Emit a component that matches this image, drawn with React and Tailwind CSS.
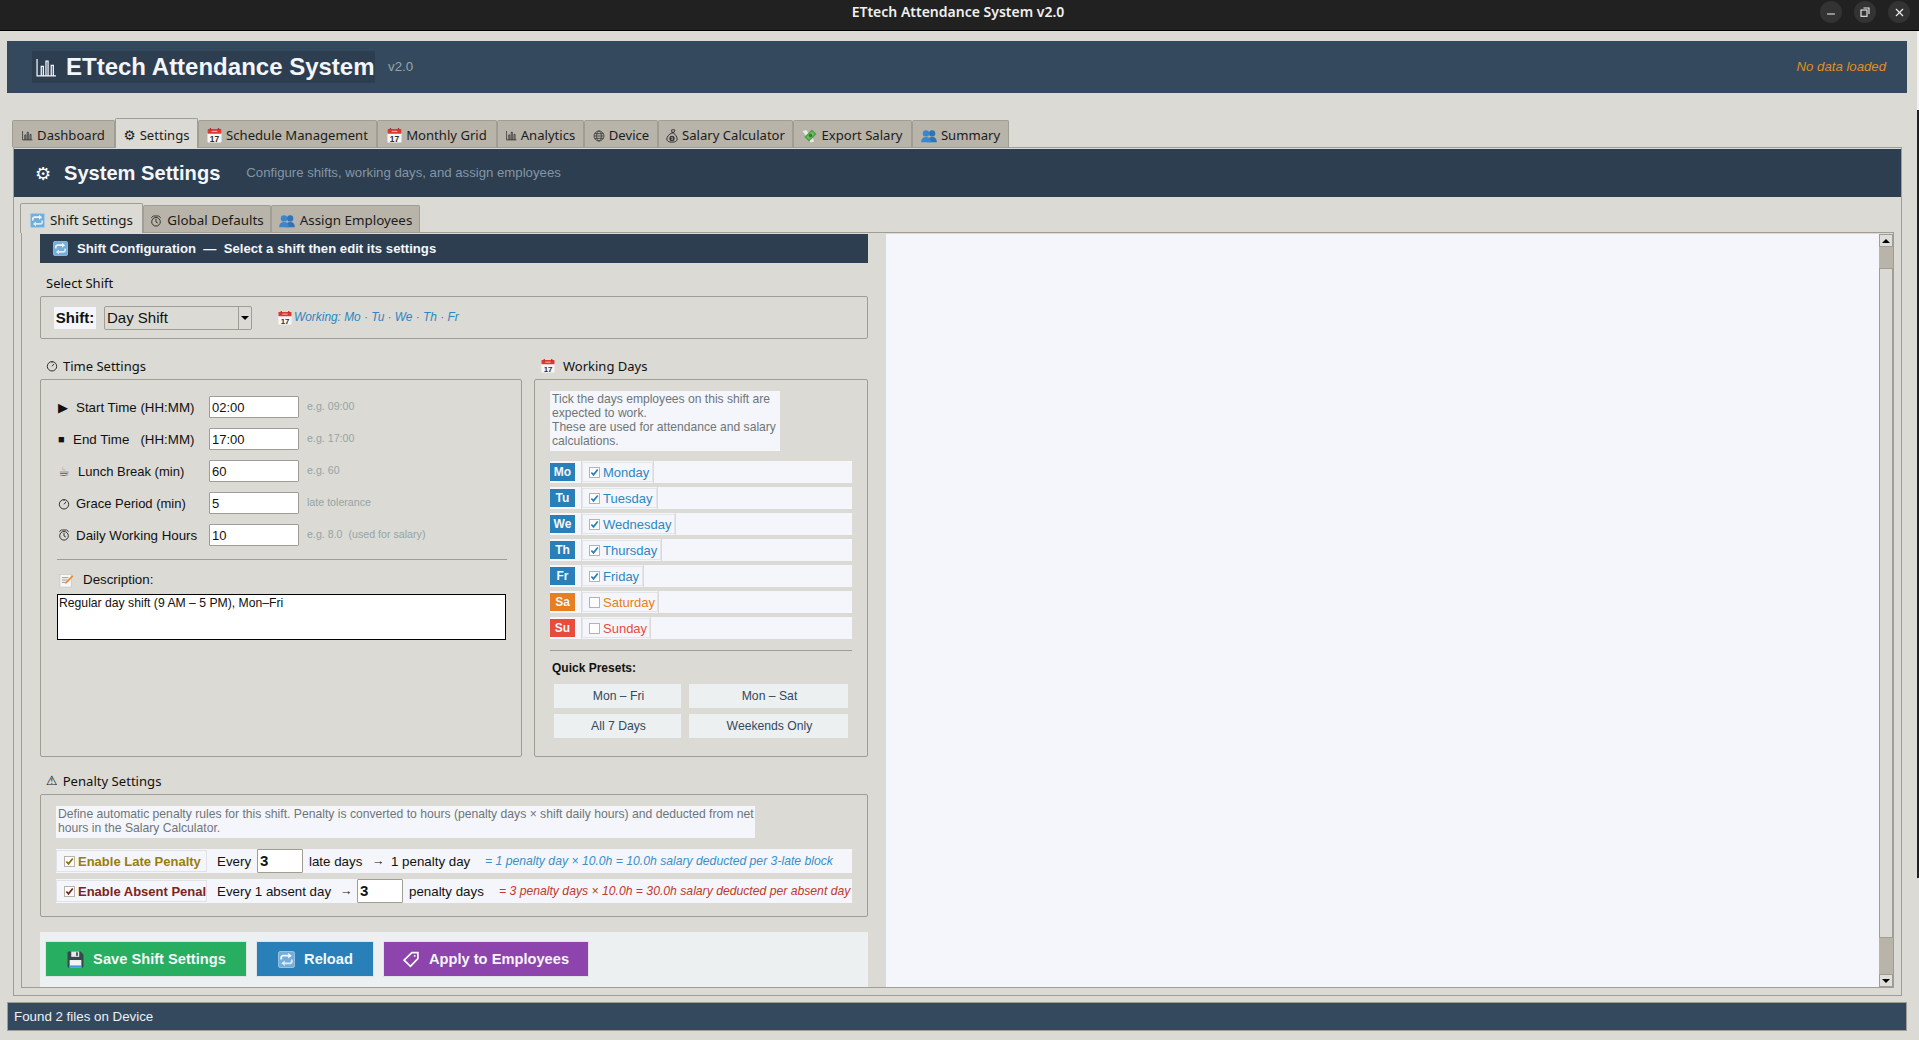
import React from "react";
import { Minus, X } from "lucide-react";

const BarsIcon = ({ className }) => (
  <svg viewBox="0 0 20 18" className={className} fill="none" stroke="currentColor" strokeWidth="1.2">
    <path d="M1 1v16h18" />
    <path d="M5 17V8h2v9M9.5 17V3h2v14M14.5 17V7h2v10" />
  </svg>
);

const CalendarIcon = ({ className }) => (
  <svg viewBox="0 0 16 16" className={className}>
    <rect x="0.5" y="1" width="15" height="14.5" rx="1" fill="#f7f7f7" />
    <rect x="0.5" y="1" width="15" height="5" rx="0.8" fill="#dc3a30" />
    <rect x="3" y="0" width="1.4" height="2.6" fill="#a33" />
    <rect x="11.6" y="0" width="1.4" height="2.6" fill="#a33" />
    <path d="M5 3.6h6" stroke="#f5c7c3" strokeWidth="1" />
    <text x="8" y="14.6" textAnchor="middle" fontSize="9" fontWeight="700" fill="#2f2f2f" fontFamily="Liberation Sans, sans-serif">17</text>
  </svg>
);

const RefreshIcon = ({ className }) => (
  <svg viewBox="0 0 16 16" className={className}>
    <rect x="0.5" y="0.5" width="15" height="15" rx="1.5" fill="#70aede" stroke="#a9cbe6" strokeWidth="0.8" />
    <path d="M3 8V6.2C3 5 3.8 4.4 5 4.4h5" fill="none" stroke="#f5f5f5" strokeWidth="1.7" />
    <path d="M9.6 1.9l3.4 2.6-3.4 2.6z" fill="#f5f5f5" />
    <path d="M13 8v1.8c0 1.2-.8 1.8-2 1.8H6" fill="none" stroke="#e3e9ee" strokeWidth="1.7" />
    <path d="M6.4 9l-3.4 2.6 3.4 2.6z" fill="#e3e9ee" />
  </svg>
);

const PeopleIcon = ({ className }) => (
  <svg viewBox="0 0 18 16" className={className}>
    <circle cx="12.6" cy="5" r="3.6" fill="#2f74b5" />
    <path d="M7 15c.3-4 2-5.8 5.6-5.8S17.7 11 18 15z" fill="#2f74b5" />
    <circle cx="5.6" cy="5" r="3.7" fill="#3b87cf" />
    <path d="M0 15c.3-4 2-5.8 5.6-5.8s5.4 1.8 5.7 5.8z" fill="#3b87cf" />
  </svg>
);

const MoneyIcon = ({ className }) => (
  <svg viewBox="0 0 16 16" className={className}>
    <path d="M0.5 3.5l4-1.5 3 4-3 2.5z" fill="#e9e9e9" />
    <path d="M7.5 11l1.5 4.5 4-1-1.5-3.5z" fill="#e9e9e9" />
    <path d="M2.5 9.5L10.5 1.5l5 5-8 8z" fill="#4c9e46" />
    <path d="M4.5 9.5L10.5 3.5l3 3-6 6z" fill="#6dbb5c" />
    <circle cx="9" cy="8" r="1.8" fill="#2f7a2e" />
  </svg>
);

const BagIcon = ({ className }) => (
  <svg viewBox="0 0 14 16" className={className} fill="none" stroke="#2a2a2a" strokeWidth="1.1">
    <path d="M6.5 1c1-.6 3-.6 4 .2L9 4.2H7.2z" />
    <path d="M7 4.4C3.5 6 1 8.8 1 11.5 1 14 3 15.2 7 15.2s6-1.2 6-3.7C13 8.8 10.8 6 8.6 4.4z" />
    <circle cx="7" cy="10.8" r="3" fill="#2a2a2a" stroke="none" />
    <path d="M8.2 9.8c-.6-.5-2.2-.4-2.1.4.1.9 2.3.5 2.2 1.4-.1.8-1.7.9-2.4.3" stroke="#e8e8e8" strokeWidth="0.7" />
  </svg>
);

const GlobeIcon = ({ className }) => (
  <svg viewBox="0 0 14 14" className={className} fill="none" stroke="#333" strokeWidth="0.9">
    <circle cx="7" cy="7" r="5.8" />
    <ellipse cx="7" cy="7" rx="2.7" ry="5.8" />
    <path d="M1.2 7h11.6M2 4.2h10M2 9.8h10" />
  </svg>
);

const ClockIcon = ({ className }) => (
  <svg viewBox="0 0 12 12" className={className} fill="none" stroke="currentColor" strokeWidth="1">
    <circle cx="6" cy="6.3" r="4.7" />
    <path d="M6 1v1.8M6 6.3l2-2.4" />
  </svg>
);

const AlarmIcon = ({ className }) => (
  <svg viewBox="0 0 12 12" className={className} fill="none" stroke="#333" strokeWidth="1">
    <circle cx="6" cy="6.8" r="4.3" />
    <path d="M1.3 2.8L3 1.2M10.7 2.8L9 1.2M3.2 1h5.6M6 4v3l1.8 1" />
  </svg>
);

const FloppyIcon = ({ className }) => (
  <svg viewBox="0 0 16 16" className={className}>
    <path d="M0.5 1.5a1 1 0 0 1 1-1h11.3l2.7 2.7v11.3a1 1 0 0 1-1 1h-13a1 1 0 0 1-1-1z" fill="#37474f" />
    <rect x="4" y="0.5" width="7.5" height="5" fill="#e8e8e8" />
    <rect x="8.6" y="1.2" width="1.6" height="3.4" fill="#37474f" />
    <rect x="2.5" y="8.5" width="11" height="7" fill="#f4f4f4" />
    <rect x="2.5" y="13.6" width="11" height="1.9" fill="#3f9be0" />
  </svg>
);

const TagIcon = ({ className }) => (
  <svg viewBox="0 0 16 16" className={className} fill="none" stroke="#fff" strokeWidth="1.6">
    <path d="M8.4 1.5h5.6v5.6l-7 7.4L1 8.6z" />
    <circle cx="11" cy="4.6" r="0.9" fill="#fff" stroke="none" />
  </svg>
);

const MemoIcon = ({ className }) => (
  <svg viewBox="0 0 16 16" className={className}>
    <rect x="1" y="1.5" width="12" height="13.5" fill="#f7f7f7" stroke="#bdbdbd" strokeWidth="0.6" />
    <path d="M3 5h7M3 7.5h6M3 10h4" stroke="#7d7d7d" strokeWidth="0.8" />
    <path d="M14 2.5l1.3 1.3-7 7-2 .7.7-2z" fill="#e98a2b" />
  </svg>
);

const CheckBox = ({ checked, color }) => (
  <span className="flex h-[11px] w-[11px] shrink-0 items-center justify-center border border-[#b5b3aa] bg-white">
    {checked && (
      <svg viewBox="0 0 10 10" className="h-[9px] w-[9px]" fill="none" stroke={color} strokeWidth="1.9">
        <path d="M1.5 5l2.4 2.6L8.6 1.6" />
      </svg>
    )}
  </span>
);

const GroupBox = ({ className, children }) => (
  <div className={"rounded-[2px] border border-[#a09e94] " + className}>{children}</div>
);

const mainTabs = [
  { name: "Dashboard", w: "w-[103px]", icon: <BarsIcon className="h-[11px] w-[11px]" /> },
  { name: "Settings", w: "w-[83px]", active: true, icon: <span className="font-['DejaVu_Sans',sans-serif] text-[13.5px] leading-none">⚙</span> },
  { name: "Schedule Management", w: "w-[179px]", icon: <CalendarIcon className="h-[15px] w-[15px]" /> },
  { name: "Monthly Grid", w: "w-[120px]", icon: <CalendarIcon className="h-[15px] w-[15px]" /> },
  { name: "Analytics", w: "w-[87px]", icon: <BarsIcon className="h-[11px] w-[11px]" /> },
  { name: "Device", w: "w-[74px]", icon: <GlobeIcon className="h-[12px] w-[12px]" /> },
  { name: "Salary Calculator", w: "w-[135px]", icon: <BagIcon className="h-[14px] w-[12px]" /> },
  { name: "Export Salary", w: "w-[119px]", icon: <MoneyIcon className="h-[15px] w-[15px]" /> },
  { name: "Summary", w: "w-[97px]", icon: <PeopleIcon className="h-[14px] w-[16px]" /> },
];

const subTabs = [
  { name: "Shift Settings", w: "w-[123px]", active: true, icon: <RefreshIcon className="h-[15px] w-[15px]" /> },
  { name: "Global Defaults", w: "w-[128px]", icon: <AlarmIcon className="h-[12px] w-[12px]" /> },
  { name: "Assign Employees", w: "w-[149px]", icon: <PeopleIcon className="h-[14px] w-[16px]" /> },
];

const Tab = ({ tab, extra }) => (
  <div
    className={
      "flex shrink-0 items-center justify-center whitespace-nowrap rounded-t-[2px] border border-b-0 border-[#a09e94] font-['Noto_Sans',sans-serif] text-[#1c1c1c] " +
      tab.w + " " + extra + " " +
      (tab.active ? "relative z-10 -mb-px h-[30px] bg-[#dbdad5] pt-[4px]" : "h-[27px] bg-[#b8b4a9] pt-[3px]")
    }
  >
    {tab.icon}
    <span>{tab.name}</span>
  </div>
);

const timeRows = [
  { label: "Start Time (HH:MM)", size: "text-[13.33px]", value: "02:00", hint: "e.g. 09:00", box: "w-[18px]", icon: <span className="text-[13px]">▶</span> },
  { label: "End Time   (HH:MM)", size: "text-[13.33px]", value: "17:00", hint: "e.g. 17:00", box: "w-[15px]", icon: <span className="text-[11px]">■</span> },
  { label: "Lunch Break (min)", size: "text-[13px]", value: "60", hint: "e.g. 60", box: "w-[20px]", icon: <span className="font-['DejaVu_Sans',sans-serif] text-[13px] text-[#555]">☕</span> },
  { label: "Grace Period (min)", size: "text-[13px]", value: "5", hint: "late tolerance", box: "w-[18px]", icon: <ClockIcon className="h-[12px] w-[12px] text-[#333]" /> },
  { label: "Daily Working Hours", size: "text-[13.33px]", value: "10", hint: "e.g. 8.0  (used for salary)", box: "w-[18px]", icon: <AlarmIcon className="h-[12px] w-[12px]" /> },
];

const days = [
  { short: "Mo", name: "Monday", w: "w-[71px]", on: true, badge: "bg-[#2980b9]", text: "text-[#2e86c1]" },
  { short: "Tu", name: "Tuesday", w: "w-[75px]", on: true, badge: "bg-[#2980b9]", text: "text-[#2e86c1]" },
  { short: "We", name: "Wednesday", w: "w-[93px]", on: true, badge: "bg-[#2980b9]", text: "text-[#2e86c1]" },
  { short: "Th", name: "Thursday", w: "w-[79px]", on: true, badge: "bg-[#2980b9]", text: "text-[#2e86c1]" },
  { short: "Fr", name: "Friday", w: "w-[61px]", on: true, badge: "bg-[#2980b9]", text: "text-[#2e86c1]" },
  { short: "Sa", name: "Saturday", w: "w-[76px]", badge: "bg-[#e67e22]", text: "text-[#e67e22]" },
  { short: "Su", name: "Sunday", w: "w-[68px]", badge: "bg-[#e74c3c]", text: "text-[#e74c3c]" },
];

const DayRow = ({ day }) => (
  <div className="flex h-[22px] items-center bg-[#f4f6fb]">
    <div className={"flex h-[18px] w-[25px] items-center justify-center text-[12px] font-bold text-[#f4f6fb] " + day.badge}>
      {day.short}
    </div>
    <div className="ml-[6px] h-[22px] w-px bg-[#dbdad5]" />
    <div className={"flex h-[20px] items-center border border-[#e3e5e8] pl-[6px] " + day.w}>
      <CheckBox checked={day.on} color="#2980b9" />
      <span className={"ml-[3px] pt-px text-[13px] " + day.text}>{day.name}</span>
    </div>
    <div className="h-[22px] w-px bg-[#dbdad5]" />
  </div>
);

const PresetButton = ({ label }) => (
  <button className="h-[24px] bg-[#ecf0f1] pl-[2px] text-[12.2px] text-[#34495e]">{label}</button>
);

const NumberBox = ({ value }) => (
  <div className="flex h-[24px] w-[46px] shrink-0 items-center rounded-[1px] border border-[#a09e94] bg-white pl-[2px] text-[15px] font-bold text-[#111]">
    {value}
  </div>
);

export default function App() {
  return (
    <div className="relative flex h-screen w-full flex-col overflow-hidden bg-[#dbdad5] font-['Liberation_Sans',Arial,sans-serif] text-[#111]">
      {/* title bar */}
      <div className="relative flex h-[31px] shrink-0 items-center justify-center border-b border-black bg-[#212121] pb-[7px] pr-[3px] font-['Noto_Sans',sans-serif] text-[14px] font-semibold text-[#f0f0f0]">
        ETtech Attendance System v2.0
        <div className="absolute right-[9px] top-[1px] flex gap-[12px]">
          <span className="flex h-[22px] w-[22px] items-center justify-center rounded-full bg-[#333333]">
            <Minus size={12} strokeWidth={2} className="mt-[4px]" />
          </span>
          <span className="flex h-[22px] w-[22px] items-center justify-center rounded-full bg-[#333333]">
            <svg viewBox="0 0 10 10" className="h-[10px] w-[10px]" fill="none" stroke="#eee" strokeWidth="1.1">
              <rect x="1" y="3" width="6" height="6.3" />
              <path d="M3.5 1h5.5v6" />
            </svg>
          </span>
          <span className="flex h-[22px] w-[22px] items-center justify-center rounded-full bg-[#333333]">
            <X size={13} strokeWidth={2} />
          </span>
        </div>
      </div>

      <div className="flex min-h-0 flex-1 flex-col pt-[10px]">
        {/* app header */}
        <div className="mx-[7px] mr-[12px] flex h-[52px] shrink-0 items-center bg-[#34495e] pl-[25px] pr-[21px]">
          <div className="flex h-[32px] w-[343px] items-center gap-[9px] bg-[#2c3e50] pl-[4px] text-[#f4f6fb]">
            <BarsIcon className="h-[19px] w-[21px]" />
            <span className="whitespace-nowrap text-[24px] font-bold">ETtech Attendance System</span>
          </div>
          <span className="ml-[13px] text-[13.33px] text-[#95a5a6]">v2.0</span>
          <span className="ml-auto text-[13.2px] italic text-[#e08e1b]">No data loaded</span>
        </div>

        {/* main tabs */}
        <div className="mt-[25px] flex h-[29px] shrink-0 items-end pl-[12px]">
          {mainTabs.map((t) => (
            <Tab key={t.name} tab={t} extra="gap-[4px] text-[13.1px]" />
          ))}
        </div>

        <div className="ml-[13px] mr-[17px] flex h-[849px] shrink-0 flex-col border border-[#a09e94] pt-px">
          <div className="mx-0 flex h-[48px] shrink-0 items-center bg-[#2c3e50] pl-[21px]">
            <span className="w-[29px] font-['DejaVu_Sans',sans-serif] text-[18px] text-white">⚙</span>
            <span className="text-[20.1px] font-bold text-[#f4f6fb]">System Settings</span>
            <span className="ml-[26px] text-[13.2px] text-[#8496a4]">Configure shifts, working days, and assign employees</span>
          </div>

          {/* sub tabs */}
          <div className="mt-[6px] flex h-[29px] shrink-0 items-end pl-[6px]">
            {subTabs.map((t) => (
              <Tab key={t.name} tab={t} extra="gap-[5px] text-[13.4px]" />
            ))}
          </div>

          <div className="ml-[7px] mr-[7px] mb-[7px] flex min-h-0 flex-1 border border-[#a09e94] pt-px pl-[18px]">
            {/* scroll content */}
            <div className="flex w-[828px] shrink-0 flex-col">
              <div className="flex h-[29px] items-center gap-[9px] bg-[#2c3e50] pl-[13px] text-[13.15px] font-bold text-[#f4f6fb]">
                <RefreshIcon className="h-[15px] w-[15px]" />
                <span className="whitespace-pre">Shift Configuration  —  Select a shift then edit its settings</span>
              </div>

              <div className="ml-[6px] mt-[12px] h-[16px] font-['Noto_Sans',sans-serif] text-[13px] leading-[16px]">Select Shift</div>
              <GroupBox className="mt-[5px] flex h-[43px] items-center pl-[13px] pt-px">
                <span className="flex h-[22px] w-[42px] items-center justify-center bg-[#f4f6fb] text-[15px] font-bold">Shift:</span>
                <div className="ml-[8px] flex h-[24px] w-[148px] items-center rounded-[2px] border border-[#a09e94]">
                  <span className="flex-1 pl-[2px] text-[15px]">Day Shift</span>
                  <span className="flex h-full w-[13px] items-center justify-center border-l border-[#a09e94]">
                    <span className="h-0 w-0 border-x-[4px] border-t-[4px] border-x-transparent border-t-black" />
                  </span>
                </div>
                <CalendarIcon className="ml-[26px] h-[14px] w-[14px]" />
                <span className="ml-[2px] text-[11.9px] italic text-[#2e86c1]">Working: Mo · Tu · We · Th · Fr</span>
              </GroupBox>

              <div className="mt-[19px] flex h-[16px] gap-[12px] font-['Noto_Sans',sans-serif] text-[13px] leading-[16px]">
                <div className="flex w-[482px] items-center pl-[6px]">
                  <ClockIcon className="h-[12px] w-[12px] text-[#333]" />
                  <span className="ml-[5px]">Time Settings</span>
                </div>
                <div className="flex items-center pl-[7px]">
                  <CalendarIcon className="h-[14px] w-[14px]" />
                  <span className="ml-[8px]">Working Days</span>
                </div>
              </div>

              <div className="mt-[5px] flex h-[378px] gap-[12px]">
                {/* time settings */}
                <GroupBox className="w-[482px] pl-[16px] pt-[16px]">
                  <div className="flex flex-col gap-[10px] pl-px">
                    {timeRows.map((r) => (
                      <div key={r.label} className="flex h-[22px] items-center">
                        <div className="flex w-[151px] items-center pt-px">
                          <span className={"flex shrink-0 items-center " + r.box}>{r.icon}</span>
                          <span className={"whitespace-pre " + r.size}>{r.label}</span>
                        </div>
                        <div className="flex h-[22px] w-[90px] items-center rounded-[1px] border border-[#a09e94] bg-white pl-[2px] pt-px text-[13px]">{r.value}</div>
                        <span className="mb-[2px] ml-[8px] whitespace-pre text-[10.67px] text-[#95a5a6]">{r.hint}</span>
                      </div>
                    ))}
                  </div>
                  <div className="mt-[13px] h-px w-[450px] bg-[#a09e94]" />
                  <div className="mt-[12px] flex h-[16px] items-center pl-[2px]">
                    <MemoIcon className="h-[15px] w-[15px]" />
                    <span className="ml-[9px] text-[13.33px]">Description:</span>
                  </div>
                  <div className="mt-[6px] h-[46px] w-[449px] border border-black bg-white pl-[1px] pt-px text-[12.2px] leading-[14px]">
                    Regular day shift (9 AM – 5 PM), Mon–Fri
                  </div>
                </GroupBox>

                {/* working days */}
                <GroupBox className="w-[334px] pl-[15px] pt-[11px]">
                  <div className="h-[60px] w-[230px] bg-[#f4f6fb] pl-[2px] pt-px text-[12.1px] leading-[14px] text-[#6e7579]">
                    Tick the days employees on this shift are expected to work.
                    <br />
                    These are used for attendance and salary calculations.
                  </div>
                  <div className="mt-[10px] flex w-[302px] flex-col gap-[4px]">
                    {days.map((d) => (
                      <DayRow key={d.short} day={d} />
                    ))}
                  </div>
                  <div className="mt-[11px] h-px w-[302px] bg-[#a09e94]" />
                  <div className="mt-[9px] h-[16px] pl-[2px] text-[12px] font-bold leading-[16px]">Quick Presets:</div>
                  <div className="ml-[4px] mt-[8px] grid w-[294px] grid-cols-[127px_159px] gap-x-[8px] gap-y-[6px]">
                    <PresetButton label="Mon – Fri" />
                    <PresetButton label="Mon – Sat" />
                    <PresetButton label="All 7 Days" />
                    <PresetButton label="Weekends Only" />
                  </div>
                </GroupBox>
              </div>

              <div className="mt-[16px] flex h-[16px] items-center pl-[6px] font-['Noto_Sans',sans-serif] text-[13.1px] leading-[16px]">
                <span className="font-['DejaVu_Sans',sans-serif] text-[13px]">⚠</span>
                <span className="ml-[5px]">Penalty Settings</span>
              </div>
              <GroupBox className="mt-[5px] h-[123px] pl-[15px] pt-[11px]">
                <div className="h-[32px] w-[699px] bg-[#f4f6fb] pl-[2px] pt-px text-[12.17px] leading-[14px] text-[#6e7579]">
                  Define automatic penalty rules for this shift. Penalty is converted to hours (penalty days × shift daily hours) and deducted from net hours in the Salary Calculator.
                </div>
                <div className="mt-[11px] flex h-[24px] w-[796px] items-center whitespace-nowrap bg-[#f4f6fb] text-[13.33px]">
                  <div className="flex h-[22px] w-[151px] shrink-0 items-center overflow-hidden border border-[#e0e2e6] pl-[7px] text-[13px]">
                    <CheckBox checked color="#8a6d0a" />
                    <span className="ml-[3px] pt-px font-bold text-[#9a7d0a]">Enable Late Penalty</span>
                  </div>
                  <span className="ml-[10px] w-[40px] pt-px">Every</span>
                  <NumberBox value="3" />
                  <span className="ml-[6px] w-[63px] pt-px">late days</span>
                  <span className="w-[19px] pt-px text-[12.5px]">→</span>
                  <span className="w-[94px] pt-px">1 penalty day</span>
                  <span className="text-[12.2px] italic text-[#3a8fcb]">= 1 penalty day × 10.0h = 10.0h salary deducted per 3-late block</span>
                </div>
                <div className="mt-[6px] flex h-[24px] w-[796px] items-center whitespace-nowrap bg-[#f4f6fb] text-[13.33px]">
                  <div className="flex h-[22px] w-[151px] shrink-0 items-center overflow-hidden border border-[#e0e2e6] pl-[7px] text-[13px]">
                    <CheckBox checked color="#7b241c" />
                    <span className="ml-[3px] pt-px font-bold text-[#7b241c]">Enable Absent Penalty</span>
                  </div>
                  <span className="ml-[10px] w-[123px] pt-px">Every 1 absent day</span>
                  <span className="w-[17px] pt-px text-[12.5px]">→</span>
                  <NumberBox value="3" />
                  <span className="ml-[6px] w-[90px] pt-px">penalty days</span>
                  <span className="text-[12.2px] italic text-[#c0392b]">= 3 penalty days × 10.0h = 30.0h salary deducted per absent day</span>
                </div>
              </GroupBox>

              {/* action buttons */}
              <div className="mt-[15px] flex h-[55px] gap-[9px] bg-[#ecf0f1] pl-[5px] pt-[9px] text-[14.67px] font-bold text-[#f4f6fb]">
                <button className="flex h-[36px] w-[202px] items-center justify-center gap-[9px] border border-[#dfe3e6] bg-[#27ae60] pl-[1px]">
                  <FloppyIcon className="h-[17px] w-[17px]" />
                  Save Shift Settings
                </button>
                <button className="flex h-[36px] w-[118px] items-center justify-center gap-[9px] border border-[#dfe3e6] bg-[#2980b9] pl-[1px]">
                  <RefreshIcon className="h-[17px] w-[17px]" />
                  Reload
                </button>
                <button className="flex h-[36px] w-[206px] items-center justify-center gap-[9px] border border-[#dfe3e6] bg-[#8e44ad]">
                  <TagIcon className="h-[17px] w-[17px]" />
                  Apply to Employees
                </button>
              </div>
            </div>

            {/* empty white viewport */}
            <div className="ml-[18px] min-w-0 flex-1 bg-[#f4f6fb]" />

            {/* scrollbar */}
            <div className="flex w-[14px] shrink-0 flex-col">
              <div className="flex h-[13px] items-center justify-center border border-[#a09e94] bg-[#dfded9]">
                <span className="h-0 w-0 border-x-[4px] border-b-[4px] border-x-transparent border-b-black" />
              </div>
              <div className="h-[21px] bg-[#b8b4a9]" />
              <div className="flex-1 border border-[#a09e94] bg-[#dbdad5]" />
              <div className="h-[36px] bg-[#b8b4a9]" />
              <div className="flex h-[13px] items-center justify-center border border-[#a09e94] bg-[#dfded9]">
                <span className="h-0 w-0 border-x-[4px] border-t-[4px] border-x-transparent border-t-black" />
              </div>
            </div>
          </div>
        </div>

        {/* status bar */}
        <div className="ml-[7px] mr-[12px] mt-[6px] flex h-[29px] shrink-0 items-center border border-[#a09e94] bg-[#34495e] pl-[6px] pt-px text-[13.33px] text-[#ecf0f1]">
          Found 2 files on Device
        </div>
      </div>

      {/* window behind peeking through on the right edge */}
      <div className="absolute right-0 top-[31px] h-[79px] w-[2px] bg-[#f2f2f2]" />
      <div className="absolute right-0 top-[110px] h-[768px] w-[2px] bg-[#212121]" />
    </div>
  );
}
